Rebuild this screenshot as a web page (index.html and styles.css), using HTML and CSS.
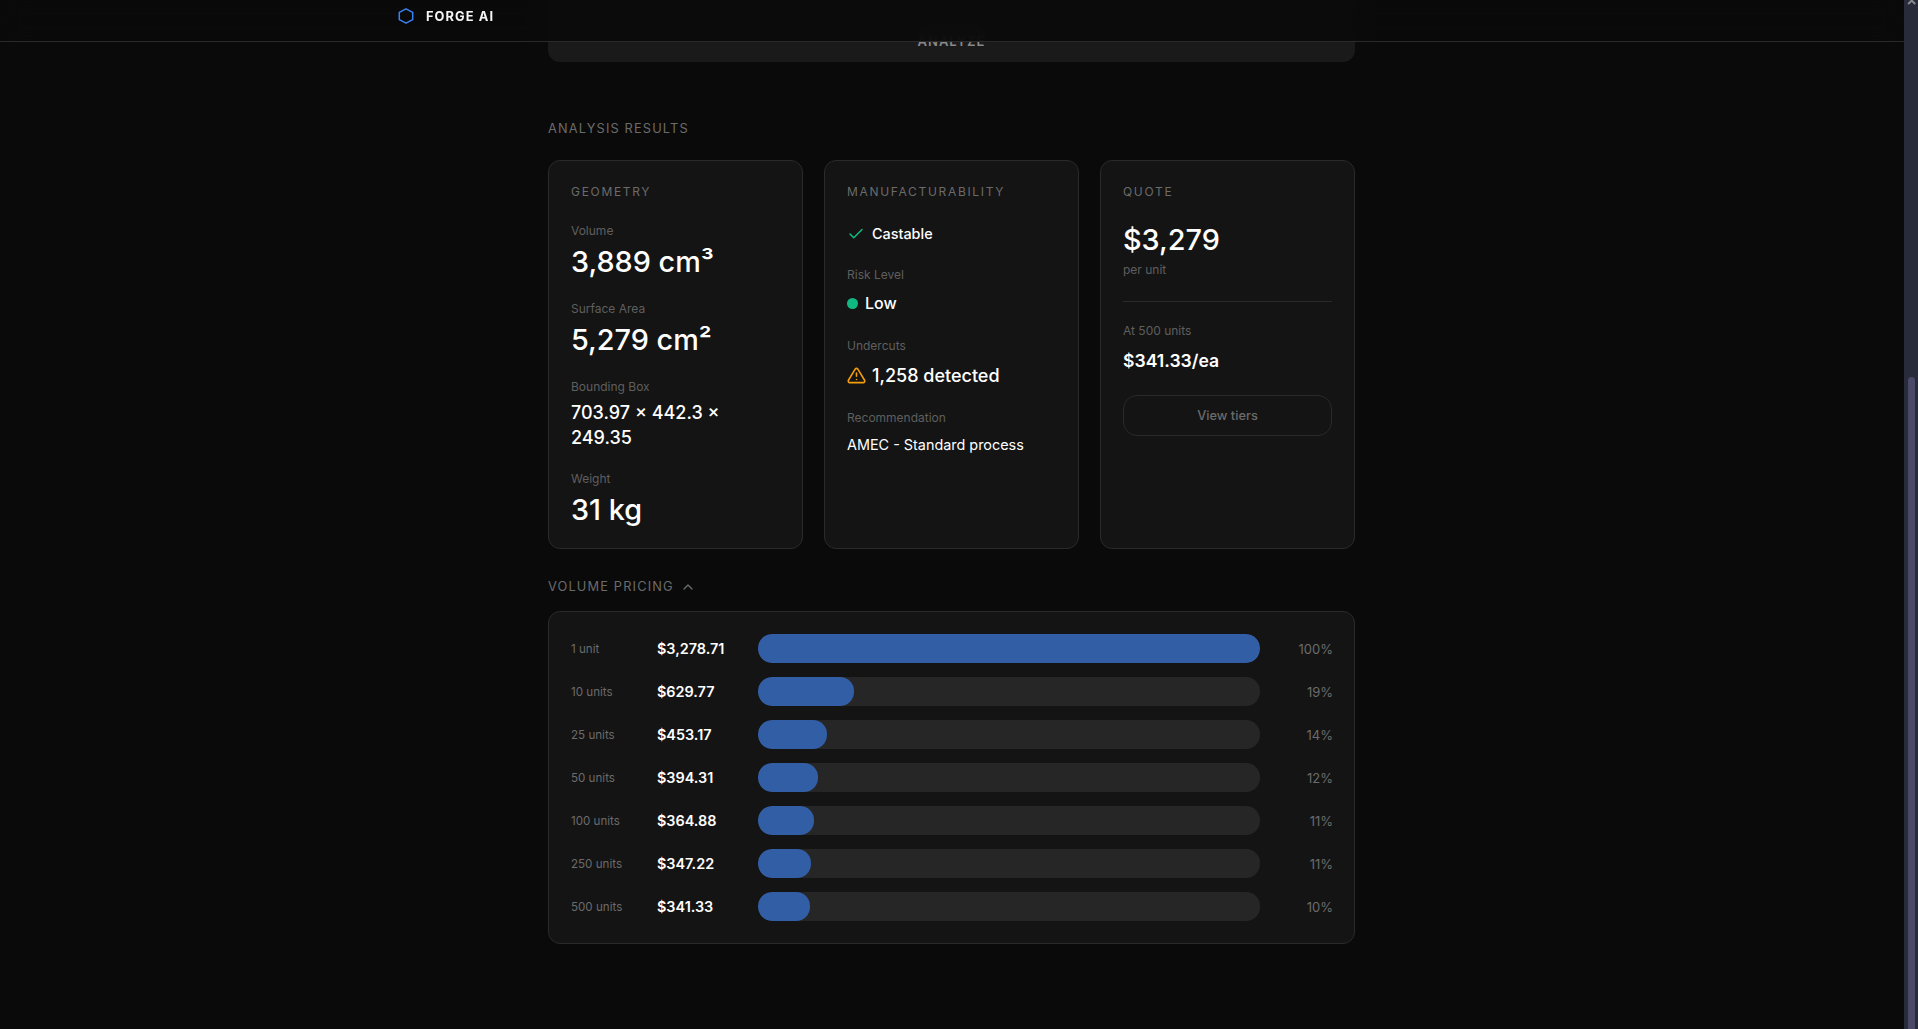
FILE: index.html
```html
<!DOCTYPE html>
<html lang="en">
<head>
<meta charset="utf-8">
<title>Forge AI</title>
<link rel="stylesheet" href="styles.css">
</head>
<body>
<div class="app">
  <div class="viewport">
    <header class="topbar">
      <svg class="logo" viewBox="0 0 16 16" width="16" height="16" fill="none" stroke="#3b82f6" stroke-width="1.5" stroke-linejoin="round"><path d="M8 .8 14.7 4.4v7.2L8 15.2 1.3 11.6V4.4z"/></svg>
      <span class="brand">FORGE AI</span>
    </header>
    <main class="content">
      <button class="analyze"><span>ANALYZE</span></button>
      <h2 class="section-title results-title">ANALYSIS RESULTS</h2>
      <section class="cards">
        <article class="card">
          <h3 class="card-title">GEOMETRY</h3>
          <div class="metric first"><div class="label">Volume</div><div class="big">3,889 cm³</div></div>
          <div class="metric"><div class="label">Surface Area</div><div class="big">5,279 cm²</div></div>
          <div class="metric"><div class="label">Bounding Box</div><div class="mid">703.97 × 442.3 × 249.35</div></div>
          <div class="metric"><div class="label">Weight</div><div class="big">31 kg</div></div>
        </article>
        <article class="card">
          <h3 class="card-title">MANUFACTURABILITY</h3>
          <div class="status">
            <svg viewBox="0 0 24 24" width="18" height="18" fill="none" stroke="#10b981" stroke-width="2" stroke-linecap="round" stroke-linejoin="round"><path d="M20 6 9 17l-5-5"/></svg>
            <span>Castable</span>
          </div>
          <div class="metric m2"><div class="label">Risk Level</div><div class="mid with-icon tight"><i class="dot"></i>Low</div></div>
          <div class="metric m2"><div class="label">Undercuts</div><div class="mid with-icon under">
            <svg viewBox="0 0 24 24" width="19" height="19" fill="none" stroke="#f59e0b" stroke-width="2" stroke-linecap="round" stroke-linejoin="round"><path d="M10.3 3.9 1.8 18a2 2 0 0 0 1.7 3h17a2 2 0 0 0 1.7-3L13.7 3.9a2 2 0 0 0-3.4 0z"/><path d="M12 9v4"/><path d="M12 17h.01"/></svg>
            1,258 detected</div></div>
          <div class="metric m2"><div class="label">Recommendation</div><div class="rec">AMEC - Standard process</div></div>
        </article>
        <article class="card">
          <h3 class="card-title">QUOTE</h3>
          <div class="price">$3,279</div>
          <div class="label per">per unit</div>
          <div class="rule"></div>
          <div class="label">At 500 units</div>
          <div class="each">$341.33/ea</div>
          <button class="tiers">View tiers</button>
        </article>
      </section>
      <h2 class="section-title volume-title">VOLUME PRICING
        <svg viewBox="0 0 24 24" width="16" height="16" fill="none" stroke="#6b6b6b" stroke-width="2" stroke-linecap="round" stroke-linejoin="round"><path d="m18 15-6-6-6 6"/></svg>
      </h2>
      <section class="pricing">
        <div class="row"><span class="qty">1 unit</span><span class="amt">$3,278.71</span><span class="track"><span class="fill" style="width:100%"></span></span><span class="pct">100%</span></div>
        <div class="row"><span class="qty">10 units</span><span class="amt">$629.77</span><span class="track"><span class="fill" style="width:19.2%"></span></span><span class="pct">19%</span></div>
        <div class="row"><span class="qty">25 units</span><span class="amt">$453.17</span><span class="track"><span class="fill" style="width:13.8%"></span></span><span class="pct">14%</span></div>
        <div class="row"><span class="qty">50 units</span><span class="amt">$394.31</span><span class="track"><span class="fill" style="width:12%"></span></span><span class="pct">12%</span></div>
        <div class="row"><span class="qty">100 units</span><span class="amt">$364.88</span><span class="track"><span class="fill" style="width:11.1%"></span></span><span class="pct">11%</span></div>
        <div class="row"><span class="qty">250 units</span><span class="amt">$347.22</span><span class="track"><span class="fill" style="width:10.6%"></span></span><span class="pct">11%</span></div>
        <div class="row"><span class="qty">500 units</span><span class="amt">$341.33</span><span class="track"><span class="fill" style="width:10.4%"></span></span><span class="pct">10%</span></div>
      </section>
    </main>
  </div>
  <div class="scrollbar">
    <svg class="arrow" viewBox="0 0 14 6" width="14" height="6"><path d="M4.2 4 7.7 .5l3.5 3.5" fill="none" stroke="#8a8a92" stroke-width="2"/></svg>
    <div class="thumb"></div>
  </div>
</div>
</body>
</html>
```
FILE: styles.css
```css
* { box-sizing: border-box; }
html, body { margin: 0; height: 100%; overflow: hidden; }
body { background: #0a0a0a; color: #fff; font-family: Inter, "Liberation Sans", sans-serif; }
h2, h3 { margin: 0; font-weight: 400; }
.app { display: flex; height: 100vh; }
.viewport { position: relative; flex: 1; min-width: 0; overflow: hidden; }
.topbar { position: absolute; top: 0; left: 0; right: 0; height: 42px; padding: 0 0 9px 398px; display: flex; align-items: center; gap: 12px; background: rgba(10,10,10,.9); backdrop-filter: blur(12px); border-bottom: 1px solid #2a2a2a; z-index: 5; }
.logo { display: block; }
.brand { font-size: 12.8px; font-weight: 700; letter-spacing: 1.1px; color: #f5f5f5; }
.content { width: 807px; margin-left: 548px; }
.analyze { display: block; width: 100%; height: 62px; border: 0; border-radius: 0 0 12px 12px; background: #1a1a1a; padding: 0; position: relative; overflow: hidden; font: 600 13px Inter, sans-serif; letter-spacing: 1px; color: #888; }
.analyze span { position: absolute; left: 0; right: 0; top: 33px; }
.section-title { font-size: 12.8px; letter-spacing: 1.15px; color: #6b6b6b; line-height: 16px; }
.results-title { margin-top: 59px; }
.cards { display: grid; grid-template-columns: repeat(3, 1fr); grid-template-rows: 389px; gap: 21px; margin-top: 23px; }
.card { background: #141414; border: 1px solid #2a2a2a; border-radius: 12px; padding: 23px 22px; min-height: 0; }
.card-title { font-size: 12px; letter-spacing: 1.68px; color: #6b6b6b; line-height: 16px; }
.metric { margin-top: 21px; }
.metric.first { margin-top: 22.5px; }
.label { font-size: 12px; line-height: 15px; color: #5f5f5f; }
.big { font-size: 28.8px; line-height: 36px; font-weight: 500; margin-top: 6px; }
.mid { font-size: 18px; line-height: 25px; font-weight: 500; margin-top: 6px; }
.status { display: flex; align-items: center; gap: 7px; font-size: 14.4px; font-weight: 500; margin-top: 24px; line-height: 20px; }
.m2 { margin-top: 22.7px; }
.with-icon { display: flex; align-items: center; gap: 6px; margin-top: 9px; }
.under { margin-top: 10px; margin-bottom: -1px; }
.tight { font-size: 16px; gap: 7px; }
.dot { width: 11px; height: 11px; border-radius: 50%; background: #10b981; }
.rec { font-size: 14.4px; line-height: 20px; margin-top: 10px; }
.price { font-size: 28.8px; line-height: 38px; font-weight: 500; margin-top: 20.5px; }
.per { margin-top: 3px; }
.rule { height: 1px; background: #2a2a2a; margin: 24.5px 0 20.5px; }
.each { font-size: 17.6px; line-height: 24px; font-weight: 600; margin-top: 11.5px; }
.tiers { display: block; width: 100%; height: 41px; margin-top: 22px; background: transparent; border: 1px solid #2a2a2a; border-radius: 14px; color: #6b6b6b; font: 500 12.8px Inter, sans-serif; }
.volume-title { display: flex; align-items: center; gap: 6px; margin-top: 30px; }
.pricing { background: #141414; border: 1px solid #2a2a2a; border-radius: 12px; margin-top: 16px; padding: 22px 21px 22px 22px; display: flex; flex-direction: column; gap: 14px; }
.row { display: flex; align-items: center; height: 29px; }
.qty { width: 86px; font-size: 11.6px; color: #6b6b6b; }
.amt { width: 101px; font-size: 14.4px; font-weight: 600; }
.track { flex: 1; height: 29px; border-radius: 14px; background: #262626; overflow: hidden; display: block; }
.fill { display: block; height: 100%; border-radius: 14px; background: #325ea6; }
.pct { width: 73px; text-align: right; font-size: 13px; color: #6b6b6b; }
.scrollbar { flex: none; width: 14px; background: #272b3a; position: relative; padding-top: 377px; }
.arrow { position: absolute; top: 0; left: 0; }
.thumb { width: 7px; margin-left: 4px; height: 100%; background: #4a4a68; border-radius: 4px 4px 0 0; }
```
